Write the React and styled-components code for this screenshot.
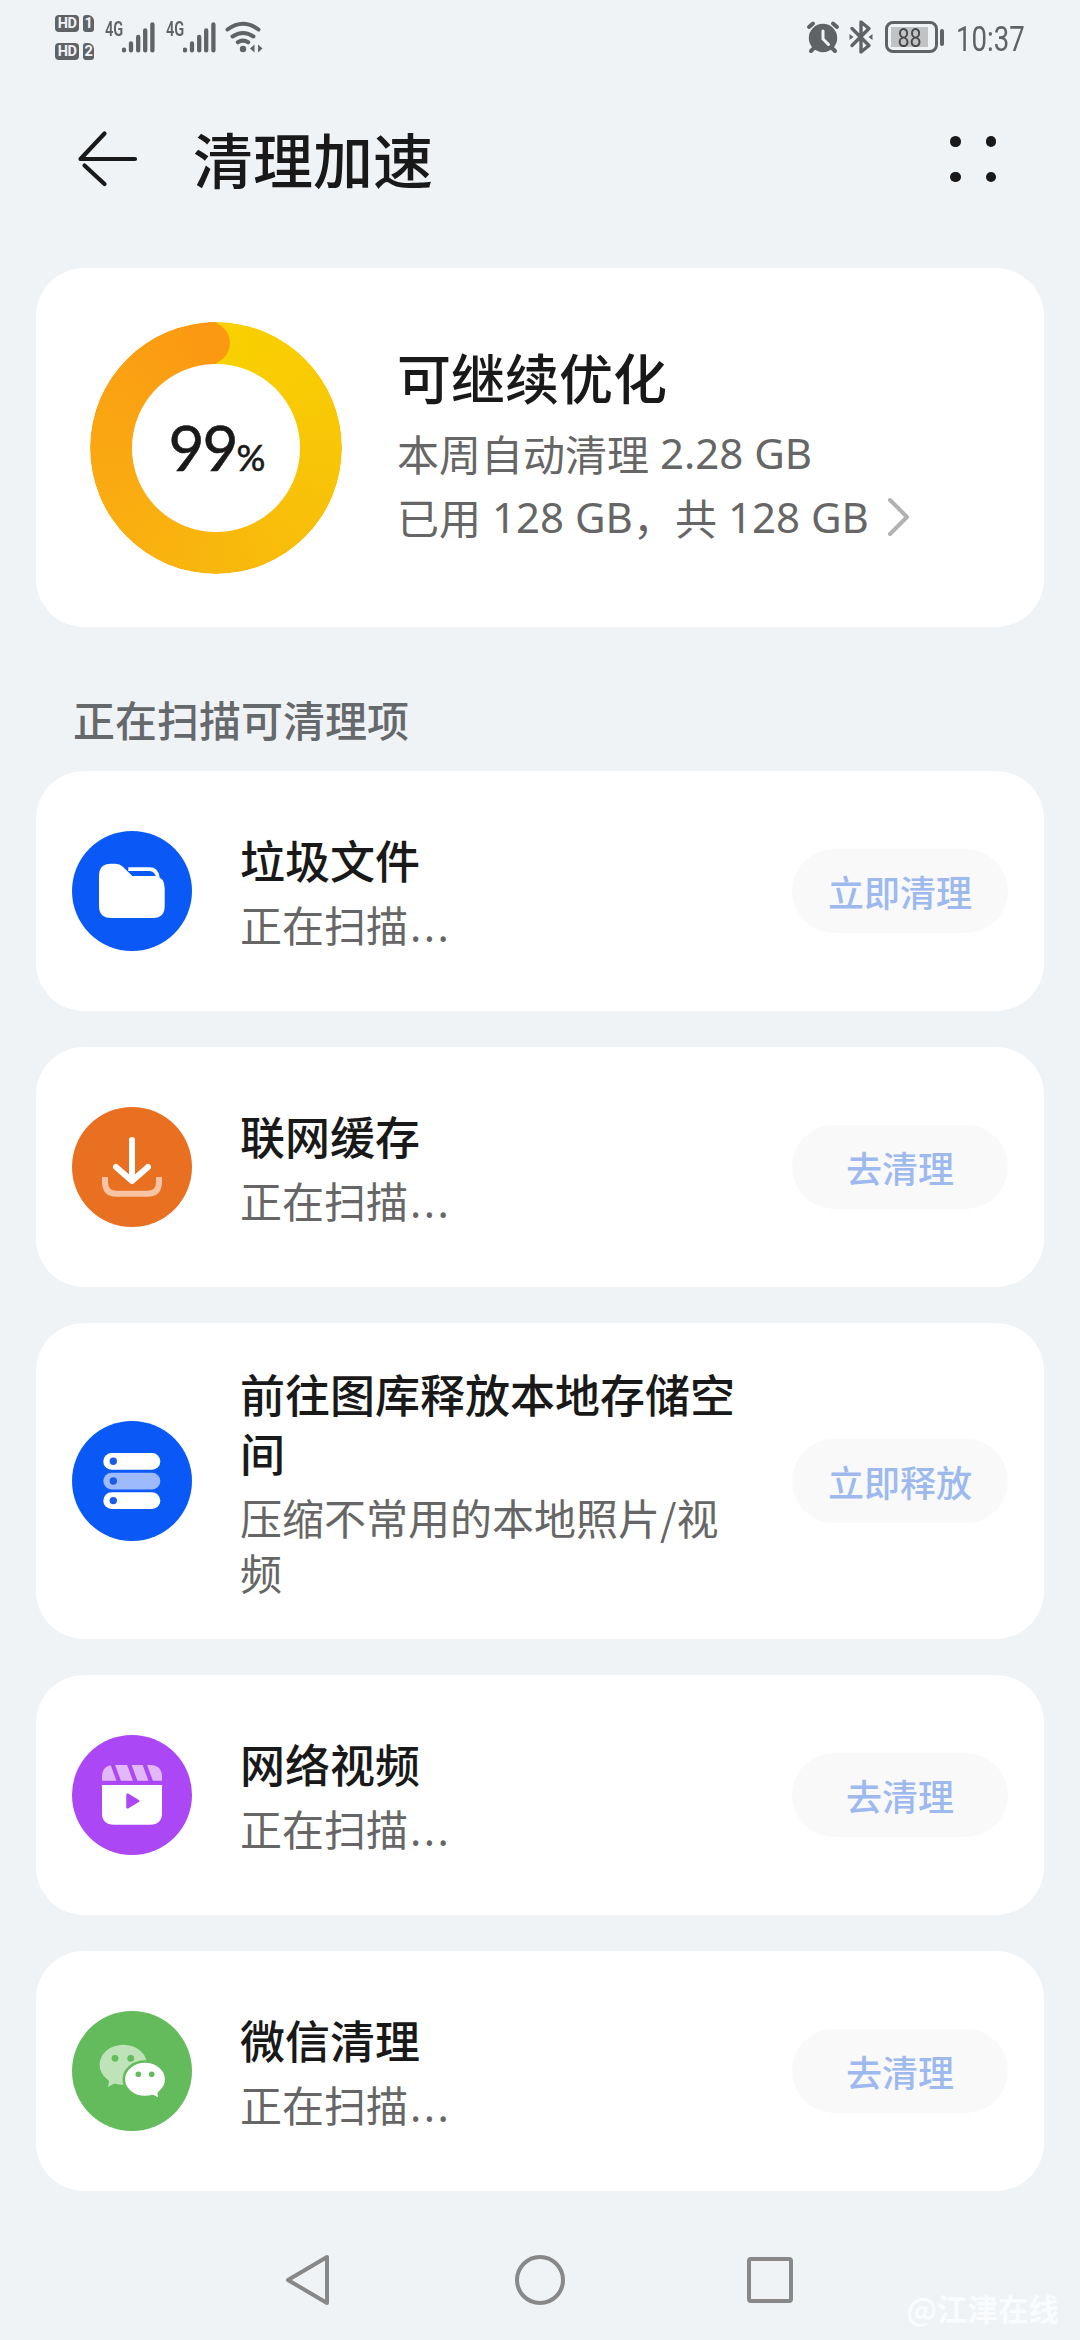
import React from "react";
import styled, { createGlobalStyle } from "styled-components";

const cjk = `"Noto Sans CJK SC", sans-serif`;
const ink = "#5f6366";

const GlobalStyle = createGlobalStyle`
  * { box-sizing: border-box; }
  body { margin: 0; background: #f0f3f6; }
`;

const Screen = styled.div`
  width: 1080px;
  height: 2340px;
  display: flex;
  flex-direction: column;
  overflow: hidden;
  background: #f0f3f6;
  color: #191919;
  font-family: ${cjk};
`;

/* ---------- status bar ---------- */
const StatusBar = styled.div`
  height: 78px;
  flex: none;
  display: flex;
  justify-content: space-between;
  align-items: flex-start;
  padding: 15px 56px 0 55px;
  color: ${ink};
`;
const StatusGroup = styled.div`
  display: flex;
  align-items: flex-start;
`;
const HdStack = styled.div`
  display: flex;
  flex-direction: column;
  gap: 11px;
  width: 50px;
`;
const HdRow = styled.div`
  display: flex;
  gap: 4px;
`;
const Badge = styled.span`
  width: ${(p) => p.$w}px;
  height: 17px;
  border-radius: ${(p) => (p.$sim ? "3px 6px 3px 3px" : "4px")};
  background: ${ink};
  color: #f0f3f6;
  font: 700 14.5px/17.5px Roboto, sans-serif;
  letter-spacing: -0.5px;
  text-align: center;
`;
const Signal = styled.div`
  display: flex;
  align-items: flex-start;
  width: 61px;
  padding-top: 6px;
`;
const NetLabel = styled.span`
  width: 17px;
  font: 600 20px/17px Roboto, sans-serif;
  white-space: nowrap;
`;
const NetText = styled.span`
  display: inline-block;
  transform: scaleX(0.73);
  transform-origin: 0 0;
`;
const StatusSvg = styled.svg`
  display: block;
  flex: none;
  margin-left: ${(p) => p.$ml || 0}px;
  margin-top: ${(p) => p.$mt || 0}px;
`;
const Battery = styled.div`
  width: 53px;
  height: 32px;
  margin: 6px 0 0 11px;
  padding: 3px;
  border: 3px solid ${ink};
  border-radius: 8px;
`;
const BatteryLevel = styled.div`
  width: 37px;
  height: 20px;
  background: #c0c2c3;
  color: #47494b;
  font: 400 26px/22px Roboto, sans-serif;
  display: flex;
  justify-content: center;
`;
const Narrow = styled.span`
  display: block;
  transform: scaleX(${(p) => p.$x});
  transform-origin: ${(p) => p.$origin || "50% 50%"};
`;
const BatteryTip = styled.div`
  width: 4px;
  height: 17px;
  margin: 14px 0 0 2px;
  border-radius: 2px;
  background: ${ink};
`;
const Clock = styled.div`
  width: 68px;
  margin: 6px 0 0 12px;
  font: 400 34.5px/36px Roboto, sans-serif;
  white-space: nowrap;
`;

/* ---------- header ---------- */
const Header = styled.header`
  height: 190px;
  flex: none;
  display: flex;
  align-items: flex-start;
  padding: 49px 84px 0 76px;
`;
const Title = styled.h1`
  flex: 1;
  margin: -9px 0 0 53px;
  font-size: 60px;
  line-height: 80px;
  font-weight: 500;
`;
const MoreDots = styled.div`
  display: grid;
  grid-template-columns: 10.5px 10.5px;
  gap: 25px;
  margin-top: 9px;
`;
const Dot = styled.i`
  width: 10.5px;
  height: 10.5px;
  border-radius: 50%;
  background: #191919;
`;

/* ---------- cards ---------- */
const Card = styled.section`
  display: flex;
  align-items: center;
  flex: none;
  height: ${(p) => p.$h}px;
  margin: 0 36px;
  padding: 0 36px;
  border-radius: 48px;
  background: #fff;
`;
const SummaryCard = styled(Card)`
  padding: 0 54px;
`;
const RingBox = styled.div`
  position: relative;
  width: 252px;
  height: 252px;
  flex: none;
  display: flex;
  align-items: center;
  justify-content: center;
`;
const RingTrack = styled.div`
  position: absolute;
  inset: 0;
  border-radius: 50%;
  background: conic-gradient(#f9d100 0deg, #f8c607 90deg, #f9b70d 180deg, #faa712 270deg, #fb9912 357deg, #fb9912 360deg);
  mask: radial-gradient(circle, transparent 83.5px, #000 84.5px);
`;
const RingCap = styled.div`
  position: absolute;
  left: 98px;
  top: 0.5px;
  width: 42px;
  height: 42px;
  border-radius: 50%;
  background: linear-gradient(90deg, transparent 48%, #fb9912 48%);
`;
const Percent = styled.div`
  position: relative;
  display: flex;
  align-items: baseline;
  margin: 8px 0 0 2px;
  font-family: Lato, sans-serif;
  font-size: 62px;
  line-height: 62px;
  letter-spacing: -2px;
  -webkit-text-stroke: 0.6px #191919;
`;
const PercentSign = styled.span`
  font-size: 36px;
  letter-spacing: 0;
`;
const SummaryText = styled.div`
  margin-left: 55px;
  margin-top: -6px;
`;
const SummaryTitle = styled.h2`
  margin: 0 0 7px;
  font-size: 54px;
  line-height: 74px;
  font-weight: 500;
`;
const SummaryLine = styled.div`
  display: flex;
  align-items: center;
  height: 64px;
  font-size: 42px;
  line-height: 64px;
  color: #666;
  white-space: pre;
`;
const Latin = styled.span`
  font-family: "Noto Sans", sans-serif;
  margin-left: 11px;
`;
const SectionLabel = styled.div`
  height: 144px;
  flex: none;
  padding: 64px 0 0 73px;
  font-size: 42px;
  line-height: 56px;
  font-weight: 500;
  color: #66696c;
`;
const List = styled.div`
  display: flex;
  flex-direction: column;
  gap: 36px;
`;
const IconDisc = styled.div`
  width: 120px;
  height: 120px;
  flex: none;
  border-radius: 50%;
  background: ${(p) => p.$color};
`;
const ItemText = styled.div`
  flex: 1;
  margin: 0 42px 0 48px;
`;
const ItemTitle = styled.div`
  font-size: 45px;
  line-height: 59px;
  font-weight: 500;
`;
const ItemSub = styled.div`
  margin-top: 7px;
  font-size: 42px;
  line-height: 55px;
  color: #666;
`;
const Ellipsis = styled.span`
  font-family: "Noto Sans", sans-serif;
  letter-spacing: 2.5px;
  margin-left: 2px;
`;
const Action = styled.button`
  width: 216px;
  height: 84px;
  flex: none;
  border: 0;
  padding: 0;
  border-radius: 42px;
  background: #f9f9fa;
  color: #9db9ee;
  font: 500 36px/83px ${cjk};
`;

/* ---------- navigation ---------- */
const NavBar = styled.nav`
  position: relative;
  flex: 1;
  display: flex;
  justify-content: center;
  gap: 177px;
  padding-top: 62px;
`;
const Watermark = styled.div`
  position: absolute;
  right: 21px;
  bottom: 12px;
  font-size: 30.5px;
  line-height: 40px;
  font-weight: 700;
  color: #f9fbfd;
`;

const Bars = () => (
  <StatusSvg width="36" height="34" viewBox="0 0 36 34" stroke={ink} strokeWidth="4.3" strokeLinecap="round">
    <path d="M2 28.6v.8M9 22.5v6.9M16.2 16v13.4M23.2 9.5v19.9M30.4 3.5v25.9" />
  </StatusSvg>
);

const Wifi = () => (
  <StatusSvg width="40" height="34" viewBox="225 20 40 34" $ml={-2} $mt={5} fill="none" stroke={ink} strokeWidth="4" strokeLinecap="round">
    <path d="M227.5 29.5Q243 18 258.5 29.5M232.5 36.5Q243 29.5 253.5 36.5M237.8 42.3Q243 39 248.2 42.3" />
    <circle cx="243" cy="49" r="3.2" fill={ink} stroke="none" />
    <path d="M250 48.5l4.5-4v8zM262.5 48.5l-4.5-4v8z" fill={ink} stroke="none" />
  </StatusSvg>
);

const Alarm = () => (
  <StatusSvg width="34" height="34" viewBox="806 20 34 34" $mt={5} fill="none" stroke={ink} strokeLinecap="round">
    <circle cx="823" cy="38" r="14.2" fill={ink} stroke="none" />
    <path d="M809 27l4-3.500M837 27l-4-3.500" strokeWidth="4" />
    <path d="M814 48l-3 3M832 48l3 3" strokeWidth="4" />
    <path d="M823 31v8l5.500 5.500" stroke="#f0f3f6" strokeWidth="3" />
  </StatusSvg>
);

const Bluetooth = () => (
  <StatusSvg width="26" height="36" viewBox="849 19 26 36" $ml={8} $mt={4} fill="none" stroke={ink} strokeWidth="3.4" strokeLinejoin="round" strokeLinecap="round">
    <path d="M853 28.500l17 17-8 6.500V22l8 6.500-17 17" />
    <path d="M850.500 34l4 3-4 3zM873.500 34l-4 3 4 3z" fill={ink} stroke="none" />
  </StatusSvg>
);

const icons = {
  folder: (
    <>
      <path d="M56.300 38.200H77.500Q84.500 38.200 85.800 46.500" fill="none" stroke="#fff" strokeWidth="3.800" />
      <path d="M39 32.700H43.500Q47.800 32.700 50.600 35.500L60.300 45H83Q92.700 46.500 92.700 57V75Q92.700 87 81 87H39Q27 87 27 75V45Q27 32.700 39 32.700Z" fill="#fff" />
    </>
  ),
  download: (
    <>
      <path d="M33 73V75Q33 86.800 44.500 86.800H75.500Q87 86.800 87 75V73" fill="none" stroke="#f9c4a4" strokeWidth="6" strokeLinecap="square" />
      <path d="M60 33V73M44 60L60 74L76 60" fill="none" stroke="#fff" strokeWidth="6" strokeLinecap="round" strokeLinejoin="round" />
    </>
  ),
  storage: (
    <>
      {[[32, "#fff"], [51.7, "#9dbbfc"], [71.3, "#fff"]].map(([y, fill]) => (
        <g key={y}>
          <rect x="31.300" y={y} width="57" height="16.700" rx="8.300" fill={fill} />
          <circle cx="41.300" cy={y + 8.3} r="3.700" fill="#1a5be8" />
        </g>
      ))}
    </>
  ),
  video: (
    <>
      <path d="M30 45.700V42Q30 30 42 30H78Q90 30 90 42V45.700Z" fill="#e2b8fb" />
      <path d="M40.500 29L47 46.700M57 29L63.500 46.700M72.500 29L79 46.700" stroke="#ab47f5" strokeWidth="4.200" />
      <path d="M30 50H90V78Q90 89.700 78 89.700H42Q30 89.700 30 78Z" fill="#fff" />
      <path d="M55.500 59.700L66.200 66L55.500 72.300Z" fill="#ab47f5" stroke="#ab47f5" strokeWidth="2.500" strokeLinejoin="round" />
    </>
  ),
  wechat: (
    <>
      <ellipse cx="51.300" cy="53.700" rx="23.700" ry="20" fill="#bfe3b9" />
      <path d="M35 66L37 70.500L36 76L44.500 71.500L48 66Z" fill="#bfe3b9" />
      <circle cx="43" cy="47.300" r="3.400" fill="#64bb5c" />
      <circle cx="58.700" cy="47.300" r="3.400" fill="#64bb5c" />
      <ellipse cx="73" cy="68.300" rx="21.200" ry="17.800" fill="#fff" stroke="#64bb5c" strokeWidth="2.600" />
      <path d="M77 83.500L80.500 83.500L86 86.300L85.500 82L88 78L84 74Z" fill="#fff" />
      <circle cx="66.300" cy="63.300" r="2.800" fill="#64bb5c" />
      <circle cx="79.700" cy="63.300" r="2.800" fill="#64bb5c" />
    </>
  ),
};

const scanning = (
  <>
    正在扫描<Ellipsis>...</Ellipsis>
  </>
);

const items = [
  { icon: "folder", color: "#0a59f7", title: "垃圾文件", sub: scanning, action: "立即清理", h: 240 },
  { icon: "download", color: "#e97021", title: "联网缓存", sub: scanning, action: "去清理", h: 240 },
  { icon: "storage", color: "#0a59f7", title: "前往图库释放本地存储空间", sub: "压缩不常用的本地照片/视频", action: "立即释放", h: 316 },
  { icon: "video", color: "#ab47f5", title: "网络视频", sub: scanning, action: "去清理", h: 240 },
  { icon: "wechat", color: "#64bb5c", title: "微信清理", sub: scanning, action: "去清理", h: 240 },
];

export default function App() {
  return (
    <Screen>
      <GlobalStyle />
      <StatusBar>
        <StatusGroup>
          <HdStack>
            {[1, 2].map((n) => (
              <HdRow key={n}>
                <Badge $w={24}>HD</Badge>
                <Badge $w={11} $sim>{n}</Badge>
              </HdRow>
            ))}
          </HdStack>
          {[1, 2].map((n) => (
            <Signal key={n}>
              <NetLabel>
                <NetText>4G</NetText>
              </NetLabel>
              <Bars />
            </Signal>
          ))}
          <Wifi />
        </StatusGroup>
        <StatusGroup>
          <Alarm />
          <Bluetooth />
          <Battery>
            <BatteryLevel>
              <Narrow $x={0.83}>88</Narrow>
            </BatteryLevel>
          </Battery>
          <BatteryTip />
          <Clock>
            <Narrow $x={0.8} $origin="0 0">10:37</Narrow>
          </Clock>
        </StatusGroup>
      </StatusBar>

      <Header>
        <svg width="64" height="64" viewBox="76 127 64 64" fill="none" stroke="#191919" strokeWidth="4.200" strokeLinecap="round" strokeLinejoin="round">
          <path d="M104.500 133.500L80.500 159H135M84.500 165.500L104.500 184" />
        </svg>
        <Title>清理加速</Title>
        <MoreDots>
          <Dot />
          <Dot />
          <Dot />
          <Dot />
        </MoreDots>
      </Header>

      <SummaryCard $h={359}>
        <RingBox>
          <RingTrack />
          <RingCap />
          <Percent>
            99<PercentSign>%</PercentSign>
          </Percent>
        </RingBox>
        <SummaryText>
          <SummaryTitle>可继续优化</SummaryTitle>
          <SummaryLine>
            本周自动清理<Latin>2.28 GB</Latin>
          </SummaryLine>
          <SummaryLine>
            已用<Latin>128 GB</Latin>，共<Latin>128 GB</Latin>
            <StatusSvg $ml={17} width="24" height="44" viewBox="0 0 24 44" fill="none" stroke="#b2b2b2" strokeWidth="4" strokeLinecap="round" strokeLinejoin="round">
              <path d="M4 5L21 22L4 39" />
            </StatusSvg>
          </SummaryLine>
        </SummaryText>
      </SummaryCard>

      <SectionLabel>正在扫描可清理项</SectionLabel>

      <List>
        {items.map((it) => (
          <Card key={it.icon} $h={it.h}>
            <IconDisc $color={it.color}>
              <svg width="120" height="120" viewBox="0 0 120 120">{icons[it.icon]}</svg>
            </IconDisc>
            <ItemText>
              <ItemTitle>{it.title}</ItemTitle>
              <ItemSub>{it.sub}</ItemSub>
            </ItemText>
            <Action>{it.action}</Action>
          </Card>
        ))}
      </List>

      <NavBar>
        <svg width="54" height="54" viewBox="0 0 54 54" fill="none" stroke="#888" strokeWidth="4" strokeLinejoin="round">
          <path d="M6 27L45 4V50Z" />
        </svg>
        <svg width="54" height="54" viewBox="0 0 54 54" fill="none" stroke="#888" strokeWidth="4">
          <circle cx="27" cy="27" r="23" />
        </svg>
        <svg width="54" height="54" viewBox="0 0 54 54" fill="none" stroke="#888" strokeWidth="4">
          <rect x="5" y="6" width="42" height="42" rx="2" />
        </svg>
        <Watermark>@江津在线</Watermark>
      </NavBar>
    </Screen>
  );
}
